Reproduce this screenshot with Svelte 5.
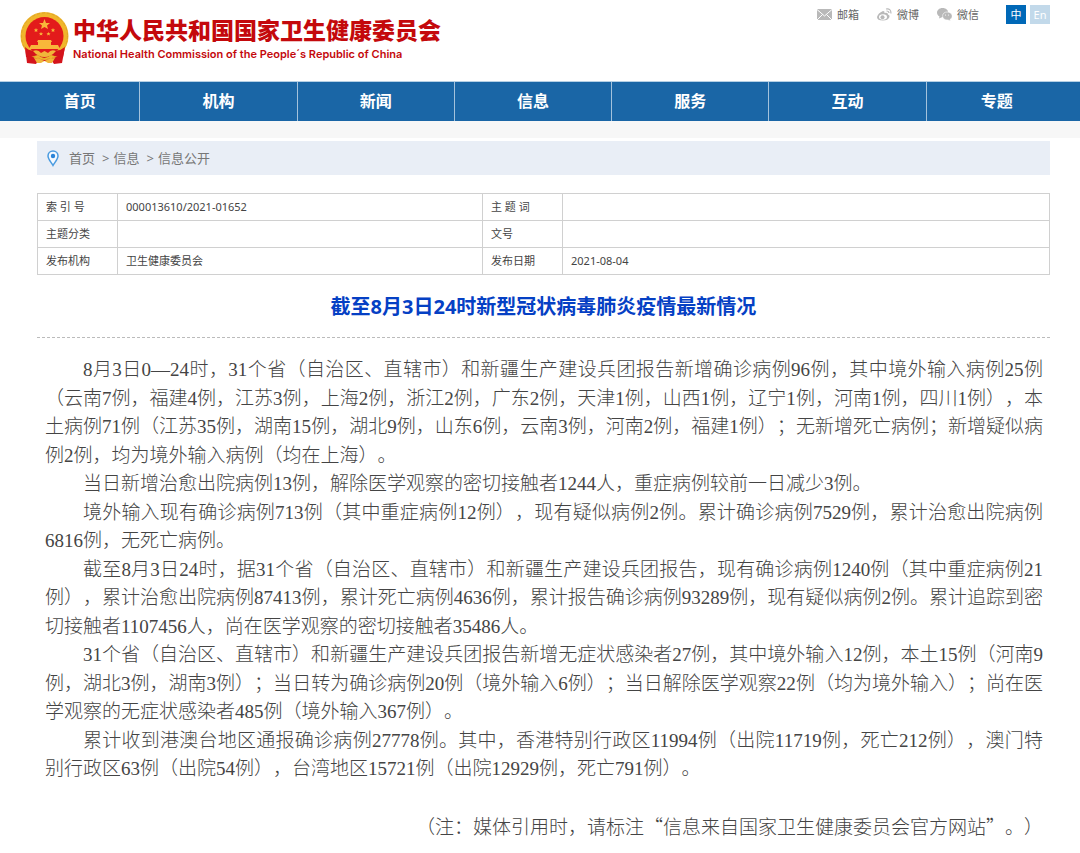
<div class="page">
  <header class="site-header">
    <a class="brand" href="/">
      <svg class="emblem" viewBox="0 0 50 54" aria-hidden="true">
        <path d="M5 35 L7 51 L16 52 L18 49 L32 49 L34 52 L42 51 L45 35 Z" fill="#d4141c" />
        <circle cx="24.500" cy="24" r="24" fill="#f0b62c" />
        <circle cx="24.500" cy="24" r="23" fill="none" stroke="#dda42a" stroke-width="1" stroke-dasharray="3 2" />
        <circle cx="24.500" cy="24" r="19" fill="#e31b1b" />
        <path d="M24.500 7 L26 11 L30 11 L27 13.500 L28 17 L24.500 15 L21 17 L22 13.500 L19 11 L23 11 Z" fill="#f8b83a" />
        <g fill="#f8b83a">
          <path d="M16 16 l.7 1.500 h1.500 l-1.200 1 l.4 1.500 l-1.400 -.8 l-1.400 .8 l.4 -1.500 l-1.200 -1 h1.500 Z" />
          <path d="M33 16 l.7 1.500 h1.500 l-1.200 1 l.4 1.500 l-1.400 -.8 l-1.400 .8 l.4 -1.500 l-1.200 -1 h1.500 Z" />
          <path d="M21 20 l.7 1.300 h1.300 l-1 1 l.4 1.300 l-1.400 -.8 l-1.400 .8 l.4 -1.300 l-1 -1 h1.300 Z" />
          <path d="M28.500 20 l.7 1.300 h1.300 l-1 1 l.4 1.300 l-1.400 -.8 l-1.400 .8 l.4 -1.300 l-1 -1 h1.300 Z" />
          <path d="M17 30 L18 28 H31 L32 30 H31 V33 H38 L40 37 H9 L11 33 H18 V30 Z" />
        </g>
        <path d="M5 35 Q10 40 16 38 L20 41 H29 L33 38 Q39 40 45 35 L43 45 Q36 45 31 43 Q24 49 18 43 Q12 45 6 45 Z" fill="#d4141c" />
        <path d="M13 39 Q18 37 21 41 L24.500 39 L28 41 Q31 37 36 39 Q31 45 24.500 45 Q18 45 13 39 Z" fill="#f0b63a" />
        <path d="M14 46 L20 47 L24.500 49 L29 47 L35 46 L32 51 H28 L24.500 49 L21 51 H17 Z" fill="#f0b63a" />
      </svg>
      <span class="brand-text">
        <span class="brand-cn">中华人民共和国国家卫生健康委员会</span>
        <span class="brand-en">National Health Commission of the People´s Republic of China</span>
      </span>
    </a>

    <div class="tools">
      <a class="tool" href="#mail">
        <svg viewBox="0 0 15 13" aria-hidden="true">
          <rect y="1" width="15" height="11" fill="#b9b9b9" />
          <path d="M0 1.500 L7.500 8 L15 1.500 M0 12 L5.500 6.500 M15 12 L9.500 6.500" fill="none" stroke="#fff" />
        </svg>
        邮箱
      </a>
      <a class="tool" href="#weibo">
        <svg viewBox="0 0 15 13" aria-hidden="true">
          <path d="M6 3 Q8 3 7.500 5 Q11 4 11 6.500 Q13 7 12.500 9 Q11 12.500 6 12.500 Q0 12.500 0 9 Q1 5 6 3 Z" fill="#b9b9b9" />
          <ellipse cx="6" cy="9" rx="4" ry="2.800" fill="#fff" />
          <circle cx="5.500" cy="9.200" r="2" fill="#b9b9b9" />
          <path d="M9 1 Q14 0 14 5.500 M9.500 3 Q12 3 12 5" fill="none" stroke="#b9b9b9" stroke-width="1.200" />
        </svg>
        微博
      </a>
      <a class="tool" href="#wechat">
        <svg viewBox="0 0 15 13" aria-hidden="true">
          <path d="M5.500 0 C13 0 13 9 5.500 9 L2 10.500 L2.500 8.500 C-2 6 0 0 5.500 0 Z" fill="#b9b9b9" />
          <path d="M10 4 C16 4 16.500 10 13 11.500 L13.500 13 L11 12 C4 12.500 4 4 10 4 Z" fill="#b9b9b9" stroke="#fff" stroke-width=".6" />
          <circle cx="8.500" cy="7" r=".6" fill="#fff" />
          <circle cx="11.500" cy="7" r=".6" fill="#fff" />
        </svg>
        微信
      </a>
      <div class="langs">
        <button class="lang active">中</button>
        <button class="lang">En</button>
      </div>
    </div>
  </header>

  <nav class="main-nav">
    {#each navItems as item}
      <a href="#nav">{item}</a>
    {/each}
  </nav>
  <div class="nav-shade"></div>

  <main>
    <div class="crumbs">
      <svg viewBox="0 0 12 17" aria-hidden="true">
        <path d="M6 1 C9 1 11 3.300 11 6 C11 9 8 12 6 15.500 C4 12 1 9 1 6 C1 3.300 3 1 6 1 Z" fill="#f4f9ff" stroke="#4a9be0" stroke-width="1.500" />
        <circle cx="6" cy="6" r="2.200" fill="#2a84d8" />
      </svg>
      <a href="#home">首页</a>
      <span>&gt;</span>
      <a href="#info">信息</a>
      <span>&gt;</span>
      <a href="#open">信息公开</a>
    </div>

    <table class="meta">
      <tbody>
        {#each metaRows as row}
          <tr>
            <th scope="row">{row[0]}</th>
            <td class="wide">{row[1]}</td>
            <th scope="row">{row[2]}</th>
            <td>{row[3]}</td>
          </tr>
        {/each}
      </tbody>
    </table>

    <h1>截至8月3日24时新型冠状病毒肺炎疫情最新情况</h1>

    <article>
      {#each paragraphs as text}
        <p>{text}</p>
      {/each}
      <p class="note">（注：媒体引用时，请标注<span class="quote">“</span>信息来自国家卫生健康委员会官方网站<span class="quote">”</span>。）</p>
    </article>
  </main>
</div>

<script lang="ts">
  const navItems = ['首页', '机构', '新闻', '信息', '服务', '互动', '专题']

  const metaRows = [
    ['索 引 号', '000013610/2021-01652', '主 题 词', ''],
    ['主题分类', '', '文号', ''],
    ['发布机构', '卫生健康委员会', '发布日期', '2021-08-04'],
  ]

  const paragraphs = [
    '8月3日0—24时，31个省（自治区、直辖市）和新疆生产建设兵团报告新增确诊病例96例，其中境外输入病例25例（云南7例，福建4例，江苏3例，上海2例，浙江2例，广东2例，天津1例，山西1例，辽宁1例，河南1例，四川1例），本土病例71例（江苏35例，湖南15例，湖北9例，山东6例，云南3例，河南2例，福建1例）；无新增死亡病例；新增疑似病例2例，均为境外输入病例（均在上海）。',
    '当日新增治愈出院病例13例，解除医学观察的密切接触者1244人，重症病例较前一日减少3例。',
    '境外输入现有确诊病例713例（其中重症病例12例），现有疑似病例2例。累计确诊病例7529例，累计治愈出院病例6816例，无死亡病例。',
    '截至8月3日24时，据31个省（自治区、直辖市）和新疆生产建设兵团报告，现有确诊病例1240例（其中重症病例21例），累计治愈出院病例87413例，累计死亡病例4636例，累计报告确诊病例93289例，现有疑似病例2例。累计追踪到密切接触者1107456人，尚在医学观察的密切接触者35486人。',
    '31个省（自治区、直辖市）和新疆生产建设兵团报告新增无症状感染者27例，其中境外输入12例，本土15例（河南9例，湖北3例，湖南3例）；当日转为确诊病例20例（境外输入6例）；当日解除医学观察22例（均为境外输入）；尚在医学观察的无症状感染者485例（境外输入367例）。',
    '累计收到港澳台地区通报确诊病例27778例。其中，香港特别行政区11994例（出院11719例，死亡212例），澳门特别行政区63例（出院54例），台湾地区15721例（出院12929例，死亡791例）。',
  ]
</script>

<style>
  :global(body) {
    margin: 0;
    background: #fff;
  }
  .page {
    font-family: "Noto Sans", "Noto Sans CJK SC", sans-serif;
    color: #444;
  }
  a {
    color: inherit;
    text-decoration: none;
  }
  .site-header {
    display: flex;
    justify-content: space-between;
    align-items: flex-start;
    padding: 5px 30px 0 20px;
    height: 76px;
  }
  .brand {
    display: flex;
    gap: 3px;
    padding-top: 7px;
    color: #c4090c;
  }
  .emblem {
    width: 50px;
    height: 54px;
  }
  .brand-text {
    display: flex;
    flex-direction: column;
    white-space: nowrap;
  }
  .brand-cn {
    font-family: "Noto Sans CJK SC", sans-serif;
    font-size: 23px;
    font-weight: 900;
    line-height: 34px;
  }
  .brand-en {
    font-family: Inter, "Liberation Sans", sans-serif;
    font-size: 11px;
    font-weight: 600;
    line-height: 16px;
  }
  .tools {
    display: flex;
    align-items: center;
    gap: 18px;
    font-size: 11px;
    line-height: 19px;
    color: #666;
  }
  .tool {
    display: flex;
    align-items: center;
    gap: 5px;
  }
  .tool svg {
    width: 15px;
    height: 13px;
  }
  .langs {
    display: flex;
    gap: 4px;
    margin-left: 9px;
  }
  .lang {
    width: 20px;
    height: 19px;
    padding: 0;
    border: none;
    background: #c2d9ea;
    color: #fff;
    font: inherit;
    line-height: 19px;
    cursor: pointer;
  }
  .lang.active {
    background: #0068b7;
  }
  .main-nav {
    display: flex;
    padding: 0 13px 0 20px;
    background: #1a66a6;
    border-top: 1px solid #b5d0e5;
  }
  .main-nav a {
    flex: 157 1 0;
    box-sizing: border-box;
    border-right: 1px solid #a3c2dc;
    color: #fff;
    font-size: 16px;
    font-weight: 700;
    line-height: 39px;
    text-align: center;
  }
  .main-nav a:first-child {
    flex-grow: 120;
  }
  .main-nav a:last-child {
    flex-grow: 141;
    border-right: none;
  }
  .nav-shade {
    height: 17px;
    background: #f7f7f7;
  }
  main {
    padding: 3px 30px 0 37px;
  }
  .crumbs {
    display: flex;
    align-items: center;
    height: 34px;
    padding-left: 10px;
    background: #e9eef6;
    color: #777;
    font-size: 13px;
    line-height: 18px;
  }
  .crumbs svg {
    width: 12px;
    height: 17px;
    margin-right: 10px;
  }
  .crumbs span {
    margin: 0 4px 0 7px;
  }
  .meta {
    width: 100%;
    margin-top: 18px;
    border-collapse: collapse;
    table-layout: fixed;
    font-size: 11px;
    line-height: 16px;
  }
  .meta th,
  .meta td {
    height: 26px;
    padding: 0 8px;
    border: 1px solid #d0d0d0;
    text-align: left;
    font-weight: 400;
    box-sizing: content-box;
  }
  .meta th {
    width: 63px;
  }
  .meta .wide {
    width: 348px;
  }
  h1 {
    margin: 17px 0 0;
    padding-bottom: 15px;
    border-bottom: 1px dashed #bbb;
    color: #0540c4;
    font-size: 20px;
    line-height: 30px;
    text-align: center;
  }
  article {
    padding: 18px 7px 12px 8px;
    font-family: "Liberation Serif", "Noto Sans CJK SC", serif;
    font-size: 19px;
    font-weight: 300;
    line-height: 1.5;
    text-align: justify;
    text-spacing-trim: space-all;
    color: #444;
  }
  article p {
    margin: 0;
    text-indent: 2em;
  }
  article .note {
    margin-top: 1.5em;
    text-align: right;
  }
  .quote {
    font-family: "Noto Sans CJK SC", sans-serif;
  }
</style>
